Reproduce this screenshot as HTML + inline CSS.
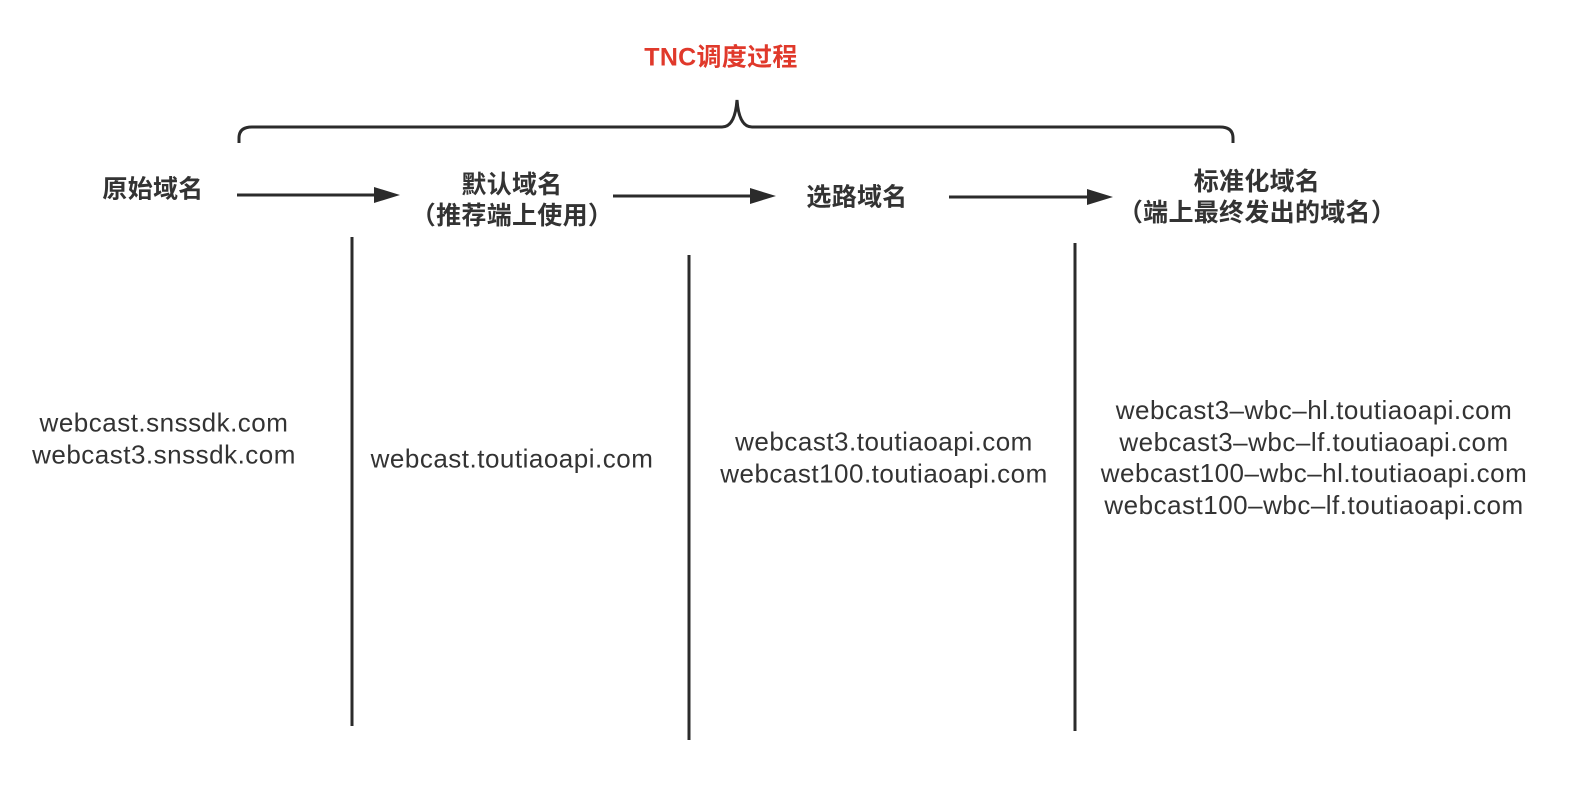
<!DOCTYPE html>
<html><head><meta charset="utf-8"><style>
body{margin:0;width:1592px;height:798px;background:#fff;position:relative;overflow:hidden;font-family:"Liberation Sans","Noto Sans CJK SC",sans-serif;color:#333}
.t{position:absolute;transform:translate(-50%,-50%);white-space:nowrap;text-align:center;font-size:26px;letter-spacing:0.5px;line-height:31.5px}
.c{font-weight:bold;font-size:25px;letter-spacing:0.3px;line-height:31px}
</style></head><body>
<svg width="1592" height="798" style="position:absolute;left:0;top:0">
<g stroke="#2b2b2b" stroke-width="3" fill="none">
<path d="M239 143 V138 Q239 127 252 127 H722 Q735 127 737 100 Q739 127 752 127 H1220 Q1233 127 1233 138 V143"/>
<line x1="352" y1="237" x2="352" y2="726"/>
<line x1="689" y1="255" x2="689" y2="740"/>
<line x1="1075" y1="243" x2="1075" y2="731"/>
<line x1="237" y1="195" x2="376" y2="195"/>
<line x1="613" y1="196" x2="752" y2="196"/>
<line x1="949" y1="197" x2="1089" y2="197"/>
</g>
<g fill="#2b2b2b">
<polygon points="374,187 400,195 374,203"/>
<polygon points="750,188 776,196 750,204"/>
<polygon points="1087,189 1113,197 1087,205"/>
</g>
</svg>
<div class="t c" style="left:721px;top:58px;color:#e0392b">TNC调度过程</div>
<div class="t c" style="left:153px;top:190px">原始域名</div>
<div class="t c" style="left:512px;top:201px">默认域名<br>（推荐端上使用）</div>
<div class="t c" style="left:857px;top:198px">选路域名</div>
<div class="t c" style="left:1257px;top:198px">标准化域名<br>（端上最终发出的域名）</div>
<div class="t" style="left:164px;top:439px">webcast.snssdk.com<br>webcast3.snssdk.com</div>
<div class="t" style="left:512px;top:459px">webcast.toutiaoapi.com</div>
<div class="t" style="left:884px;top:458px">webcast3.toutiaoapi.com<br>webcast100.toutiaoapi.com</div>
<div class="t" style="left:1314px;top:458px">webcast3–wbc–hl.toutiaoapi.com<br>webcast3–wbc–lf.toutiaoapi.com<br>webcast100–wbc–hl.toutiaoapi.com<br>webcast100–wbc–lf.toutiaoapi.com</div>
</body></html>
